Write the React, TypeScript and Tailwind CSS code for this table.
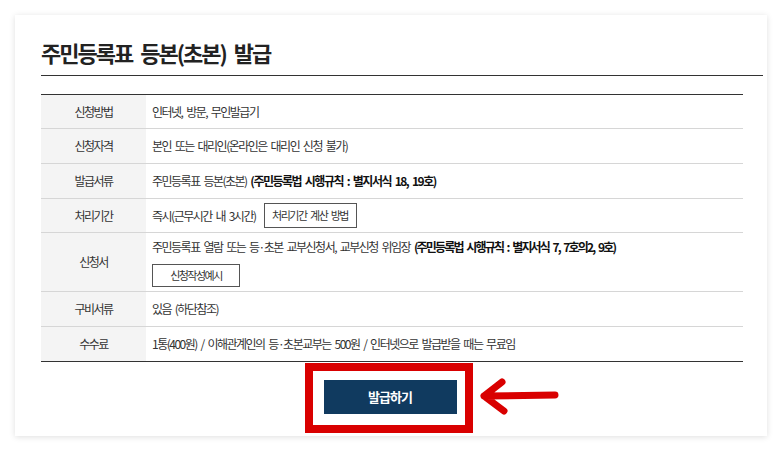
const rows: { label: string; h: string; content: React.ReactNode }[] = [
  { label: "신청방법", h: "h-[34px]", content: <span>인터넷, 방문, 무인발급기</span> },
  { label: "신청자격", h: "h-[35px]", content: <span>본인 또는 대리인(온라인은 대리인 신청 불가)</span> },
  {
    label: "발급서류",
    h: "h-[35px]",
    content: (
      <span>
        주민등록표 등본(초본) <b className="font-bold text-[#111]">(주민등록법 시행규칙 : 별지서식 18, 19호)</b>
      </span>
    ),
  },
  {
    label: "처리기간",
    h: "h-[34px]",
    content: (
      <div className="flex items-center">
        <span>즉시(근무시간 내 3시간)</span>
        <span className="ml-[8px] flex h-[25px] w-[93px] items-center justify-center border border-[#555] bg-white text-[11px]">
          처리기간 계산 방법
        </span>
      </div>
    ),
  },
  {
    label: "신청서",
    h: "h-[59px]",
    content: (
      <div className="flex flex-col pt-[1px]">
        <span>
          주민등록표 열람 또는 등·초본 교부신청서, 교부신청 위임장{" "}
          <b className="font-bold tracking-[-1.8px] text-[#111]">(주민등록법 시행규칙 : 별지서식 7, 7호의2, 9호)</b>
        </span>
        <span className="mt-[8px] flex h-[23px] w-[88px] items-center justify-center border border-[#555] bg-white text-[11px]">
          신청작성예시
        </span>
      </div>
    ),
  },
  { label: "구비서류", h: "h-[35px]", content: <span>있음 (하단참조)</span> },
  {
    label: "수수료",
    h: "h-[35px]",
    content: <span>1통(400원) / 이해관계인의 등·초본교부는 500원 / 인터넷으로 발급받을 때는 무료임</span>,
  },
];

export default function App() {
  return (
    <div
      className="h-[451px] w-[782px] overflow-hidden bg-white pt-[15px] pl-[15px] text-[#333]"
      style={{ fontFamily: '"Noto Sans CJK KR", "Noto Sans", sans-serif' }}
    >
      <div className="relative h-[421px] w-[752px] bg-white px-[26px] pt-[24px] shadow-[0_1px_6px_rgba(0,0,0,0.13)]">
        <div className="w-[722px] border-b border-[#333] pb-[10px]">
          <h1 className="text-[22px] leading-[26px] font-bold tracking-[-2px] [word-spacing:5px] text-[#222]">
            주민등록표 등본(초본) 발급
          </h1>
        </div>

        <div className="mt-[18px] w-[702px] border-t border-[#333] text-[12px] tracking-[-1.5px] [word-spacing:2.5px]">
          {rows.map((r, i) => (
            <div
              key={r.label}
              className={`flex ${r.h} border-b ${i === rows.length - 1 ? "border-[#333]" : "border-[#d6d6d6]"}`}
            >
              <div className="flex w-[105px] shrink-0 items-center justify-center bg-[#f4f4f4]">{r.label}</div>
              <div className="flex items-center pl-[6px]">{r.content}</div>
            </div>
          ))}
        </div>

        <div className="mt-[18px] flex justify-center pr-[2px]">
          <button className="h-[34px] w-[133px] bg-[#103a5f] text-[13px] font-bold tracking-[-1px] text-white">
            발급하기
          </button>
        </div>

        {/* red annotation */}
        <div className="absolute top-[348px] left-[290px] h-[70px] w-[168px] border-[8px] border-[#d90000]" />
        <svg className="absolute top-[363px] left-[448px]" width="100" height="40" viewBox="0 0 100 40">
          <path
            d="M21 18 L92 17 M39 4 L21 18 L41 33"
            fill="none"
            stroke="#d90000"
            strokeWidth="7"
            strokeLinecap="round"
            strokeLinejoin="round"
          />
        </svg>
      </div>
    </div>
  );
}
